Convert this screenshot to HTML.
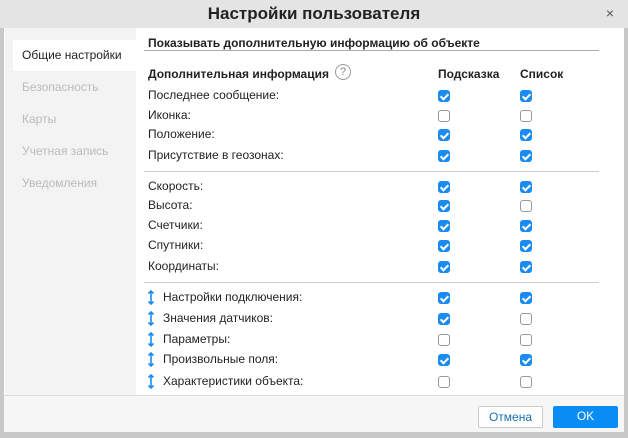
<!DOCTYPE html><html><head><meta charset="utf-8"><style>
*{margin:0;padding:0;box-sizing:border-box}
body{width:628px;height:438px;background:#c8c8c8;font-family:"Liberation Sans",Arial,sans-serif;position:relative;overflow:hidden;font-size:12px;color:#222}
.title{position:absolute;left:0;top:0;width:628px;height:28px;background:#e4e4e4;text-align:center;font-size:17px;font-weight:bold;line-height:27px;color:#222}
.x{position:absolute;right:14px;top:0;font-size:14px;font-weight:normal;color:#555}
.win{position:absolute;left:4px;top:28px;width:620px;height:404px;background:#fff}
.side{position:absolute;left:1px;top:0;width:131px;height:367px;background:#f3f3f3}
.tab{position:absolute;left:8px;width:123px;height:31px;line-height:31px;padding-left:9px;color:#bbb;font-size:12px}
.tab.a{background:#fff;color:#222}
.foot{position:absolute;left:0;top:367px;width:620px;height:37px;background:#f6f6f6;border-top:1px solid #ddd}
.btn{position:absolute;top:10px;height:22px;line-height:20px;text-align:center;border-radius:2px;font-size:12px}
.t{position:absolute;white-space:nowrap}
.cb{position:absolute;width:12px;height:12px;border:1px solid #999;border-radius:3px;background:#fff}
.cb.c{background:#1a8cf0;border-color:#1a8cf0}
.cb.c:after{content:"";position:absolute;left:3px;top:1px;width:3px;height:6px;border:solid #fff;border-width:0 2px 2px 0;transform:rotate(45deg)}
.hr{position:absolute;left:144px;width:455px;height:1px;background:#ccc}
.ar{position:absolute;left:148px;width:6px;height:15px}
</style></head><body>
<div class="title">Настройки пользователя<span class="x">×</span></div>
<div class="win"><div class="side">
<div class="tab a" style="top:12px">Общие настройки</div>
<div class="tab" style="top:44px">Безопасность</div>
<div class="tab" style="top:76px">Карты</div>
<div class="tab" style="top:108px">Учетная запись</div>
<div class="tab" style="top:140px">Уведомления</div>
</div>
<div class="foot">
<div class="btn" style="left:474px;width:65px;border:1px solid #ccc;background:#fff;color:#1a6fb0">Отмена</div>
<div class="btn" style="left:549px;width:65px;background:#0a8cf5;color:#fff">OK</div>
</div></div>
<div class="t" style="left:148px;top:36px;font-weight:bold">Показывать дополнительную информацию об объекте</div>
<div class="hr" style="top:50px;background:#aaa"></div>
<div class="t" style="left:148px;top:67px;font-weight:bold">Дополнительная информация</div>
<div style="position:absolute;left:335px;top:64px;width:16px;height:16px;border:1px solid #999;border-radius:50%;text-align:center;font-size:11px;line-height:14px;color:#888">?</div>
<div class="t" style="left:438px;top:67px;font-weight:bold">Подсказка</div>
<div class="t" style="left:520px;top:67px;font-weight:bold">Список</div>
<div class="hr" style="top:171px"></div>
<div class="hr" style="top:282px"></div>
<div id="rows"></div>
<script>
var r=[["Последнее сообщение:",95,1,1,0],["Иконка:",115,0,0,0],["Положение:",134,1,1,0],["Присутствие в геозонах:",155,1,1,0],
["Скорость:",186,1,1,0],["Высота:",205,1,0,0],["Счетчики:",225,1,1,0],["Спутники:",245,1,1,0],["Координаты:",266,1,1,0],
["Настройки подключения:",297,1,1,1],["Значения датчиков:",318,1,0,1],["Параметры:",339,0,0,1],["Произвольные поля:",359,1,1,1],["Характеристики объекта:",381,0,0,1]];
var h="";r.forEach(function(a){var y=a[1];
h+='<div class="t" style="left:'+(a[4]?163:148)+'px;top:'+(y-7)+'px">'+a[0]+'</div>';
h+='<div class="cb'+(a[2]?' c':'')+'" style="left:438px;top:'+(y-5)+'px"></div>';
h+='<div class="cb'+(a[3]?' c':'')+'" style="left:520px;top:'+(y-5)+'px"></div>';
if(a[4])h+='<svg class="ar" style="top:'+(y-7)+'px" viewBox="0 0 6 15"><path d="M3 1V14M0.5 3.5L3 1L5.5 3.5M0.5 11.5L3 14L5.5 11.5" stroke="#1a8cf0" stroke-width="1.6" fill="none"/></svg>';});
document.getElementById("rows").innerHTML=h;
</script>
</body></html>
